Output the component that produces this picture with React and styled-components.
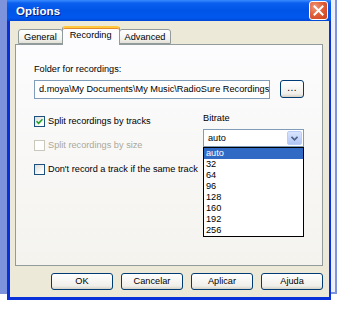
import React from "react";
import styled, { createGlobalStyle } from "styled-components";

const GlobalStyle = createGlobalStyle`
  *, *::before, *::after {
    box-sizing: border-box;
  }
  body {
    margin: 0;
    background: #ffffff;
    font-family: "Liberation Sans", Arial, sans-serif;
    font-size: 9.2px;
    color: #000;
  }
`;

const bitrates = ["auto", "32", "64", "96", "128", "160", "192", "256"];

export default function App() {
  return (
    <Desktop>
      <GlobalStyle />
      <BackWindow />
      <Dialog>
        <TitleBar>
          <Title>Options</Title>
          <CloseButton>
            <svg width="11" height="11" viewBox="0 0 11 11">
              <path d="M1.5 1.5 L9.5 9.5 M9.5 1.5 L1.5 9.5" stroke="#fff" strokeWidth="2" strokeLinecap="square" />
            </svg>
          </CloseButton>
        </TitleBar>
        <Body>
          <TabRow>
            <Tab>General</Tab>
            <Tab $active>Recording</Tab>
            <Tab>Advanced</Tab>
          </TabRow>
          <Panel>
            <Label>Folder for recordings:</Label>
            <FolderRow>
              <Field>d.moya\My Documents\My Music\RadioSure Recordings</Field>
              <SmallButton>...</SmallButton>
            </FolderRow>
            <Options>
              <CheckColumn>
                <CheckRow>
                  <CheckBox $checked>
                    <svg width="7" height="7" viewBox="0 0 7 7">
                      <path d="M0.5 3.2 L2.6 5.4 L6.5 1.2" stroke="#21A121" strokeWidth="1.6" fill="none" />
                    </svg>
                  </CheckBox>
                  <CheckLabel>Split recordings by tracks</CheckLabel>
                </CheckRow>
                <CheckRow>
                  <CheckBox $disabled />
                  <CheckLabel $disabled>Split recordings by size</CheckLabel>
                </CheckRow>
                <CheckRow>
                  <CheckBox />
                  <CheckLabel>Don't record a track if the same track</CheckLabel>
                </CheckRow>
              </CheckColumn>
              <BitrateColumn>
                <Label>Bitrate</Label>
                <Combo>
                  <ComboText>auto</ComboText>
                  <ComboArrow>
                    <svg width="7" height="5" viewBox="0 0 7 5">
                      <path d="M0.5 0.8 L3.5 3.8 L6.5 0.8" stroke="#4D6185" strokeWidth="1.6" fill="none" />
                    </svg>
                  </ComboArrow>
                  <DropList>
                    {bitrates.map((b, i) => (
                      <DropItem key={b} $selected={i === 0}>
                        {b}
                      </DropItem>
                    ))}
                  </DropList>
                </Combo>
              </BitrateColumn>
            </Options>
          </Panel>
          <ButtonRow>
            <Button>OK</Button>
            <Button>Cancelar</Button>
            <Button>Aplicar</Button>
            <Button>Ajuda</Button>
          </ButtonRow>
        </Body>
      </Dialog>
    </Desktop>
  );
}

const Desktop = styled.div`
  position: relative;
  width: 340px;
  height: 309px;
  overflow: hidden;
  background: #ffffff;
`;

const BackWindow = styled.div`
  position: absolute;
  left: 0;
  top: -10px;
  width: 337px;
  height: 304px;
  border-left: 7px solid #7d93dc;
  border-right: 2px solid #7d93dc;
  border-bottom: 2px solid #7d93dc;
  background: #eef0fa;
`;

const Dialog = styled.div`
  position: absolute;
  left: 7px;
  top: 0;
  width: 324px;
  display: flex;
  flex-direction: column;
  border-left: 3px solid #0831d9;
  border-right: 2px solid #0831d9;
  border-bottom: 3px solid #0831d9;
`;

const TitleBar = styled.div`
  height: 21px;
  margin: 0 -2px 0 -3px;
  display: flex;
  align-items: center;
  justify-content: space-between;
  padding: 0 3px 0 9px;
  background: linear-gradient(
    to bottom,
    #3a8cff 0%,
    #0a5fee 15%,
    #0055e8 50%,
    #0058ee 85%,
    #0046d5 100%
  );
`;

const Title = styled.span`
  color: #ffffff;
  font-weight: bold;
  font-size: 11.5px;
  text-shadow: 1px 1px 0 #0a1e80;
  letter-spacing: 0.1px;
`;

const CloseButton = styled.div`
  width: 19px;
  height: 19px;
  border: 1px solid #ffffff;
  border-radius: 3px;
  display: flex;
  align-items: center;
  justify-content: center;
  background: radial-gradient(circle at 30% 30%, #f09a7a 0%, #e2603a 45%, #c8401a 100%);
`;

const Body = styled.div`
  background: #ece9d8;
  padding: 5px 6px 7px 5px;
  display: flex;
  flex-direction: column;
`;

const TabRow = styled.div`
  display: flex;
  align-items: flex-end;
  padding-left: 3px;
  height: 18px;
  position: relative;
  z-index: 1;
`;

const Tab = styled.div`
  height: ${(p) => (p.$active ? "19px" : "15px")};
  padding: 0 ${(p) => (p.$active ? "7px" : "5px")};
  margin-bottom: ${(p) => (p.$active ? "-1px" : "0")};
  display: flex;
  align-items: center;
  border: 1px solid #919b9c;
  border-bottom: ${(p) => (p.$active ? "none" : "1px solid #919b9c")};
  border-top: ${(p) => (p.$active ? "2px solid #ffc83c" : "1px solid #919b9c")};
  border-radius: 3px 3px 0 0;
  background: ${(p) =>
    p.$active ? "#fcfcfe" : "linear-gradient(to bottom, #ffffff, #f3f3ef 70%, #e2e0d6)"};
  box-shadow: ${(p) => (p.$active ? "inset 0 1px 0 #e68b2c" : "none")};
  margin-left: ${(p) => (p.$active ? "-1px" : "0")};
  margin-right: ${(p) => (p.$active ? "-1px" : "0")};
  padding-bottom: ${(p) => (p.$active ? "3px" : "0")};
`;

const Panel = styled.div`
  height: 222px;
  border: 1px solid #919b9c;
  background: linear-gradient(to bottom, #fcfcfe, #f4f3ee);
  padding: 19px 18px 0 18px;
  display: flex;
  flex-direction: column;
`;

const Label = styled.div`
  line-height: 11px;
  height: 11px;
  white-space: nowrap;
`;

const FolderRow = styled.div`
  display: flex;
  align-items: flex-start;
  gap: 10px;
  margin-top: 5px;
`;

const Field = styled.div`
  width: 239px;
  height: 19px;
  border: 1px solid #7f9db9;
  background: #ffffff;
  padding-left: 4px;
  line-height: 17px;
  white-space: nowrap;
  overflow: hidden;
`;

const SmallButton = styled.div`
  width: 24px;
  height: 18px;
  border: 1px solid #003c74;
  border-radius: 3px;
  background: linear-gradient(to bottom, #ffffff, #f0efea 80%, #d6d0c5);
  text-align: center;
  line-height: 14px;
  font-size: 10px;
  letter-spacing: 0.5px;
`;

const Options = styled.div`
  display: grid;
  grid-template-columns: minmax(0, 1fr) 101px;
  margin-top: 14px;
`;

const CheckColumn = styled.div`
  display: flex;
  flex-direction: column;
  gap: 12px;
  padding-top: 2px;
  min-width: 0;
`;

const CheckRow = styled.div`
  display: flex;
  align-items: center;
  gap: 3px;
  height: 12px;
`;

const CheckBox = styled.div`
  width: 11px;
  height: 11px;
  flex: none;
  border: 1px solid ${(p) => (p.$disabled ? "#cac8bb" : "#1c5180")};
  background: ${(p) =>
    p.$disabled ? "#ffffff" : "linear-gradient(135deg, #dcdcd7, #ffffff 80%)"};
  display: flex;
  align-items: center;
  justify-content: center;
`;

const CheckLabel = styled.span`
  color: ${(p) => (p.$disabled ? "#aca899" : "#000")};
  white-space: nowrap;
  line-height: 12px;
`;

const BitrateColumn = styled.div`
  display: flex;
  flex-direction: column;
  gap: 5px;
  position: relative;
  z-index: 2;
`;

const Combo = styled.div`
  position: relative;
  height: 18px;
  border: 1px solid #7f9db9;
  background: #ffffff;
  display: flex;
  align-items: center;
  justify-content: space-between;
  padding: 1px;
`;

const ComboText = styled.span`
  padding-left: 3px;
`;

const ComboArrow = styled.div`
  width: 15px;
  height: 14px;
  border: 1px solid #b9cdf8;
  border-radius: 2px;
  background: linear-gradient(to bottom, #d9e5fd, #c1d3fb 60%, #b1c6f5);
  display: flex;
  align-items: center;
  justify-content: center;
`;

const DropList = styled.div`
  position: absolute;
  left: -1px;
  top: 17px;
  width: 101px;
  border: 1px solid #000;
  background: #ffffff;
`;

const DropItem = styled.div`
  height: 11px;
  line-height: 11px;
  padding-left: 2px;
  background: ${(p) => (p.$selected ? "#316ac5" : "transparent")};
  color: ${(p) => (p.$selected ? "#ffffff" : "#000")};
`;

const ButtonRow = styled.div`
  display: flex;
  justify-content: flex-end;
  gap: 8px;
  margin-top: 7px;
`;

const Button = styled.div`
  width: 62px;
  height: 17px;
  border: 1px solid #003c74;
  border-radius: 3px;
  background: linear-gradient(to bottom, #ffffff, #f0efea 80%, #d6d0c5);
  text-align: center;
  line-height: 15px;
`;
